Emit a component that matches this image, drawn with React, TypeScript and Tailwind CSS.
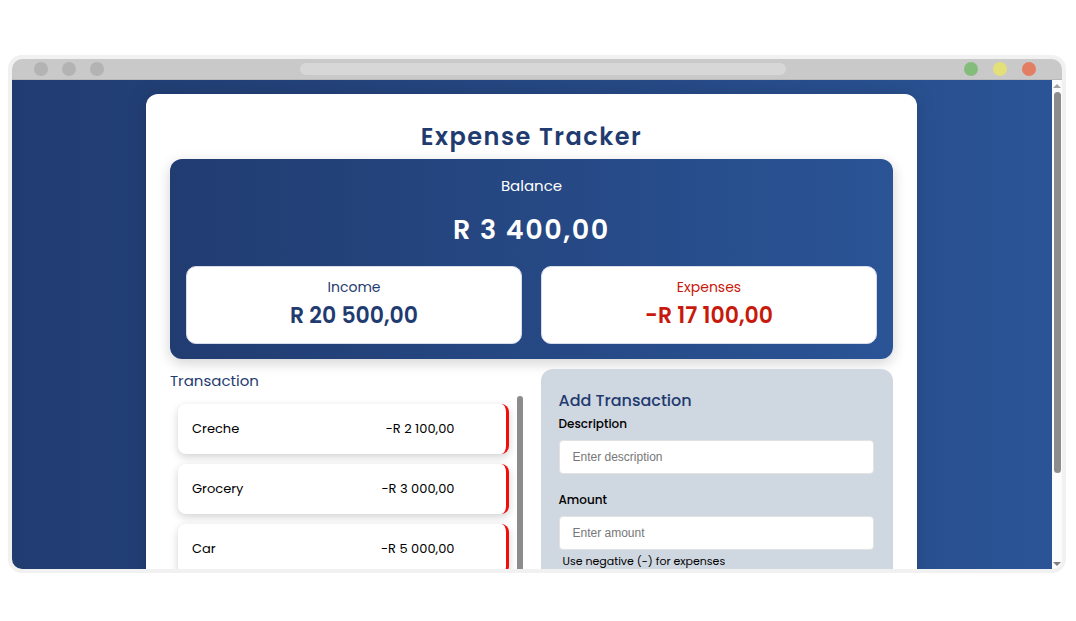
import React from 'react';

interface Transaction {
  id: number;
  text: string;
  amount: string;
}

const transactions: Transaction[] = [
  { id: 1, text: 'Creche', amount: '-R 2 100,00' },
  { id: 2, text: 'Grocery', amount: '-R 3 000,00' },
  { id: 3, text: 'Car', amount: '-R 5 000,00' },
];

const font = "font-['Poppins','Inter',sans-serif]";

const WindowBar: React.FC = () => (
  <div className="flex h-[21px] shrink-0 items-center border-b border-[#b9b9b9] bg-[#c9c9c9] pl-[22px] pr-[26px]">
    <div className="flex gap-[14px]">
      <span className="h-[14px] w-[14px] rounded-full bg-[#b3b3b3]" />
      <span className="h-[14px] w-[14px] rounded-full bg-[#b3b3b3]" />
      <span className="h-[14px] w-[14px] rounded-full bg-[#b3b3b3]" />
    </div>
    <div className="ml-[196px] h-[12px] w-[486px] rounded-full bg-[#d7d7d7]" />
    <div className="ml-auto flex gap-[15px]">
      <span className="h-[14px] w-[14px] rounded-full bg-[#84bd7b]" />
      <span className="h-[14px] w-[14px] rounded-full bg-[#e3e07a]" />
      <span className="h-[14px] w-[14px] rounded-full bg-[#e27e62]" />
    </div>
  </div>
);

const FakeScrollbar: React.FC = () => (
  <div className="flex w-[10px] shrink-0 flex-col items-center bg-[#fbfbfb]">
    <span className="mt-[4px] h-0 w-0 border-x-[4px] border-b-[4px] border-x-transparent border-b-[#a3a3a3]" />
    <span className="mt-[4px] h-[381px] w-[7px] rounded-full bg-[#8c8c8c]" />
    <span className="mt-auto mb-[3px] h-0 w-0 border-x-[4px] border-t-[4px] border-x-transparent border-t-[#7d7d7d]" />
  </div>
);

const App: React.FC = () => {
  return (
    <div className={`h-[621px] w-[1076px] overflow-hidden bg-white pt-[55px] pl-[8px] ${font}`}>
      <div className="flex h-[518px] w-[1058px] flex-col overflow-hidden rounded-[14px] border-4 border-[#f1f1f1]">
        <WindowBar />
        <div className="flex min-h-0 flex-1">
          <div className="flex-1 overflow-hidden bg-gradient-to-r from-[#213c71] to-[#2a5496] pt-[14px]">
            <div className="ml-[134px] w-[771px] rounded-t-[12px] bg-white px-6 pt-[25px] pb-6 shadow-[0_0_20px_rgba(0,0,0,0.15)]">
              <h1 className="mb-[4px] text-center text-[24px] leading-[36px] font-semibold tracking-[1.5px] text-[#1f3b70]">
                Expense Tracker
              </h1>

              <div className="rounded-[12px] bg-gradient-to-r from-[#213c71] to-[#2a5496] px-4 pt-4 pb-[15px] shadow-[0_4px_14px_rgba(0,0,0,0.18)]">
                <p className="text-center text-[15px] leading-[22px] text-white">Balance</p>
                <p className="mt-[15px] text-center text-[27px] leading-[36px] font-semibold tracking-[1.6px] text-white">
                  R 3 400,00
                </p>
                <div className="mt-[18px] grid grid-cols-2 gap-[19px]">
                  <div className="rounded-[10px] border border-[#d6dce8] bg-white pt-[10px] pb-[13px] text-center">
                    <p className="text-[14px] leading-[20px] text-[#1f3b70]">Income</p>
                    <p className="mt-[5px] text-[22px] leading-[28px] font-semibold text-[#1f3b70]">R 20 500,00</p>
                  </div>
                  <div className="rounded-[10px] border border-[#d6dce8] bg-white pt-[10px] pb-[13px] text-center">
                    <p className="text-[14px] leading-[20px] text-[#c81a0c]">Expenses</p>
                    <p className="mt-[5px] text-[22px] leading-[28px] font-semibold text-[#c81a0c]">-R 17 100,00</p>
                  </div>
                </div>
              </div>

              <div className="mt-[10px] grid grid-cols-2 gap-[18px]">
                <div>
                  <h2 className="text-[15px] leading-[24px] text-[#1f3b70]">Transaction</h2>
                  <div className="mt-[3px] flex">
                    <ul className="flex flex-1 flex-col gap-[10px] py-[8px] pl-[8px] pr-[8px]">
                      {transactions.map(t => (
                        <li
                          key={t.id}
                          className="flex h-[50px] items-center justify-between rounded-[8px] border-r-[3px] border-[#f20d0d] bg-white pl-[14px] pr-[51px] text-[13px] text-black shadow-[0_3px_8px_rgba(0,0,0,0.18)]"
                        >
                          <span>{t.text}</span>
                          <span>{t.amount}</span>
                        </li>
                      ))}
                    </ul>
                    <div className="w-[6px] rounded-full bg-[#8c8c8c]" />
                  </div>
                </div>

                <div className="rounded-[12px] bg-[#cfd7e0] pl-[18px] pr-[19px] pt-[20px] pb-6">
                  <h2 className="text-[16px] leading-[24px] font-medium text-[#1f3b70]">Add Transaction</h2>
                  <form>
                    <label className="mt-[3px] block text-[12px] leading-[16px] font-medium text-black">Description</label>
                    <input
                      type="text"
                      placeholder="Enter description"
                      className="mt-[8px] block h-[34px] w-full rounded-[4px] border border-[#e2e2e2] bg-white px-[13px] font-['Liberation_Sans',Arial,sans-serif] text-[12px] outline-none placeholder:text-[#777]"
                    />
                    <label className="mt-[18px] block text-[12px] leading-[16px] font-medium text-black">Amount</label>
                    <input
                      type="text"
                      placeholder="Enter amount"
                      className="mt-[8px] block h-[34px] w-full rounded-[4px] border border-[#e2e2e2] bg-white px-[13px] font-['Liberation_Sans',Arial,sans-serif] text-[12px] outline-none placeholder:text-[#777]"
                    />
                    <p className="mt-[4px] ml-[4px] text-[11px] leading-[14px] text-black">Use negative (-) for expenses</p>
                  </form>
                </div>
              </div>
            </div>
          </div>
          <FakeScrollbar />
        </div>
      </div>
    </div>
  );
};

export default App;
